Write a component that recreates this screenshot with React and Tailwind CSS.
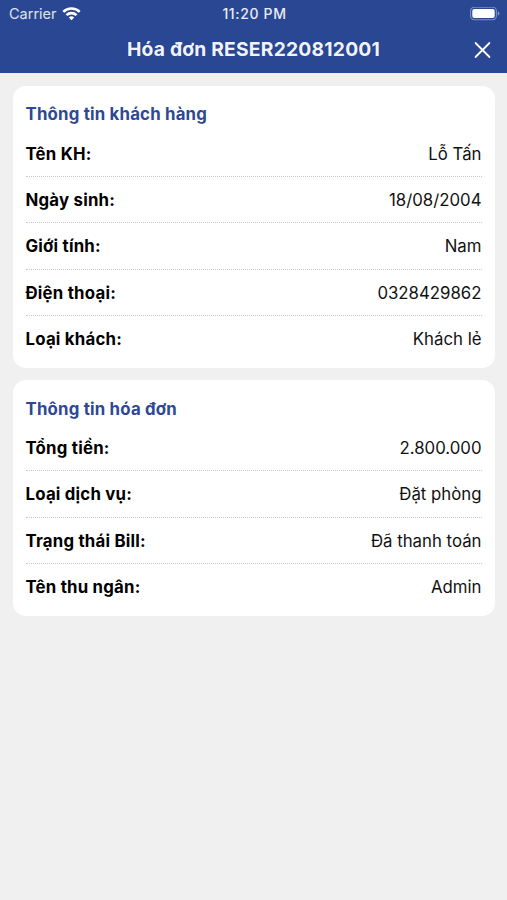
import React from 'react';

const customerInfo = [
  { label: 'Tên KH:', value: 'Lỗ Tấn' },
  { label: 'Ngày sinh:', value: '18/08/2004' },
  { label: 'Giới tính:', value: 'Nam' },
  { label: 'Điện thoại:', value: '0328429862' },
  { label: 'Loại khách:', value: 'Khách lẻ' },
];

const billInfo = [
  { label: 'Tổng tiền:', value: '2.800.000' },
  { label: 'Loại dịch vụ:', value: 'Đặt phòng' },
  { label: 'Trạng thái Bill:', value: 'Đã thanh toán' },
  { label: 'Tên thu ngân:', value: 'Admin' },
];

function WifiIcon() {
  return (
    <svg className="ml-[5px] h-[14px] w-[19px]" viewBox="0 0 19 14" fill="none" stroke="white" strokeWidth="2.6">
      <path d="M1.3 4.9a11.6 11.6 0 0 1 16.4 0" />
      <path d="M4.5 8.2a7.1 7.1 0 0 1 10 0" />
      <path d="M9.5 13.3L6.8 10.6a3.8 3.8 0 0 1 5.4 0z" fill="white" stroke="none" />
    </svg>
  );
}

function BatteryIcon() {
  return (
    <svg className="h-[14px] w-[30px]" viewBox="0 0 30 14" fill="none">
      <rect x="0.6" y="0.3" width="25.8" height="12.4" rx="3.6" stroke="white" strokeOpacity="0.4" strokeWidth="1.1" />
      <rect x="2.3" y="2" width="22.4" height="9" rx="2" fill="white" />
      <path d="M27.8 4.5v4c1-.4 1.6-1.1 1.6-2s-.6-1.6-1.6-2z" fill="white" fillOpacity="0.45" />
    </svg>
  );
}

function StatusBar() {
  return (
    <div className="grid h-[27px] grid-cols-3 items-center pl-[9px] pr-[7px] text-[14.5px]">
      <div className="flex items-center">
        <span className="text-white/85">Carrier</span>
        <WifiIcon />
      </div>
      <div className="text-center text-[14px] font-medium tracking-[0.65px] text-white/90">11:20 PM</div>
      <div className="flex justify-end">
        <BatteryIcon />
      </div>
    </div>
  );
}

function InfoCard({ title, rows }) {
  return (
    <section className="rounded-[13px] bg-white px-[13px] pb-[5.5px]">
      <h2 className="flex h-[45px] items-center pt-[13.5px] text-[16.8px] font-bold tracking-[0.2px] text-[#2d4894]">
        {title}
      </h2>
      {rows.map((row, index) => (
        <div
          key={row.label}
          className={`flex h-[46.4px] items-center justify-between border-b border-dotted pt-[2px] text-[16.8px] ${
            index === rows.length - 1 ? 'border-transparent' : 'border-[#c8c8c8]'
          }`}
        >
          <span className="font-bold tracking-[0.22px] text-black">{row.label}</span>
          <span className="text-[#111]">{row.value}</span>
        </div>
      ))}
    </section>
  );
}

function App() {
  return (
    <div className="h-[900px] bg-[#f0f0f0] font-['Inter','Noto_Sans',sans-serif]">
      <header className="h-[73px] bg-[#294793] text-white">
        <StatusBar />
        <div className="grid h-[45px] grid-cols-[40px_1fr_40px] items-center">
          <h1 className="col-start-2 text-center text-[19.3px] font-bold tracking-[0.2px] text-white/95">
            Hóa đơn RESER220812001
          </h1>
          <button className="flex justify-center">
            <svg className="h-[16px] w-[16px] -translate-x-[4.5px]" viewBox="0 0 16 16" stroke="white" strokeWidth="1.8" strokeLinecap="round">
              <path d="M1 1l14 14M15 1L1 15" />
            </svg>
          </button>
        </div>
      </header>
      <main className="flex flex-col gap-[12px] px-[12.5px] pt-[12.5px]">
        <InfoCard title="Thông tin khách hàng" rows={customerInfo} />
        <InfoCard title="Thông tin hóa đơn" rows={billInfo} />
      </main>
    </div>
  );
}

export default App;
